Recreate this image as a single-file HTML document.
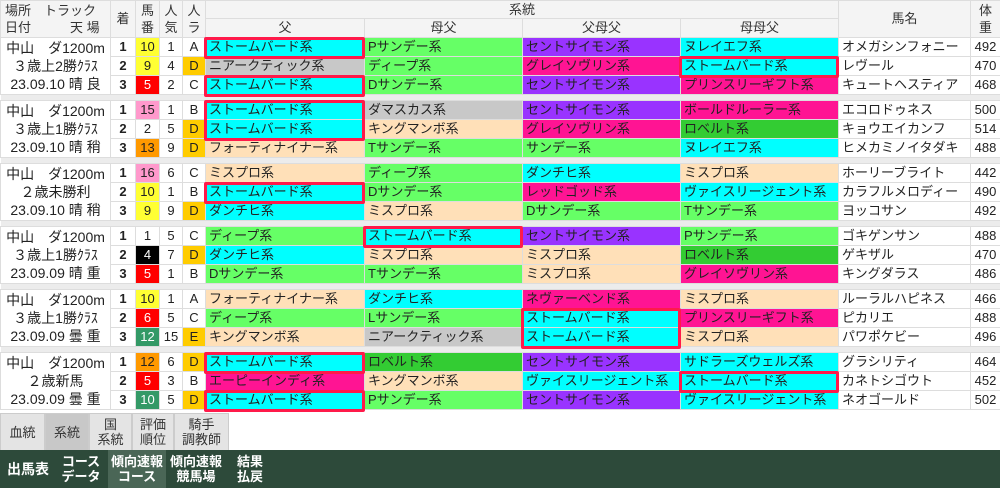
<!DOCTYPE html>
<html><head><meta charset="utf-8"><style>
*{margin:0;padding:0;box-sizing:border-box}
body{width:1000px;height:488px;overflow:hidden;background:#fff;font-family:"Liberation Sans","Noto Sans CJK JP",sans-serif;position:relative;color:#222}
table{border-collapse:collapse;table-layout:fixed;position:absolute;left:0;top:0;width:1000px}
tr{height:19px}
td{border:1px solid #ddd;height:19px;font-size:13px;line-height:14px;padding:0 3px;white-space:nowrap;overflow:hidden;vertical-align:middle}
.h td{background:#f4f4f4;text-align:center;color:#333;font-size:13px}
.n{text-align:center;padding:0}
.b{font-weight:bold}
.v{text-align:center;font-size:14px;padding:0}
.v div{height:55px;line-height:18px;overflow:hidden}
tr.sep{height:6px}
.sep td{height:6px;background:#ececec;border:none;line-height:0;font-size:0}
.cy{background:#00ffff}.gr{background:#66ff66}.pu{background:#9933ff}.pk{background:#ff1493}.gy{background:#c8c8c8}.pe{background:#ffe0b8}.dg{background:#33cc33}
.y{background:#ffff33}.r{background:#f00;color:#fff}.p{background:#ff99cc}.o{background:#ff9900}.g{background:#339966;color:#fff}.k{background:#000;color:#fff}
.d{background:#ffcc00}
.box{position:absolute;border:3px solid #ff1a4a;border-radius:2px}
.tabs{position:absolute;left:0;top:413px;height:37px;width:1000px;background:#fff}
.tab{position:absolute;top:0;height:37px;background:#e4e4e4;border:1px solid #ccc;border-bottom:none;font-size:13px;line-height:15px;text-align:center;color:#333;display:flex;align-items:center;justify-content:center}
.foot{position:absolute;left:0;top:450px;width:1000px;height:38px;background:#2d4a3a;color:#fff;font-size:13px;font-weight:bold}
.fi{position:absolute;top:0;height:38px;display:flex;align-items:center;justify-content:center;line-height:15px;text-align:center}
</style></head><body>
<table>
<colgroup><col style="width:110px"><col style="width:25px"><col style="width:24px"><col style="width:23px"><col style="width:23px"><col style="width:159px"><col style="width:158px"><col style="width:158px"><col style="width:158px"><col style="width:132px"><col style="width:30px"></colgroup>
<tr class="h" style="height:18px"><td rowspan="2" style="line-height:17px;padding:0 4px;text-align:left">場所　トラック<br>日付　　　天 場</td><td rowspan="2" class="n">着</td><td rowspan="2" class="n" style="line-height:17px">馬<br>番</td><td rowspan="2" class="n" style="line-height:17px">人<br>気</td><td rowspan="2" class="n" style="line-height:17px">人<br>ラ</td><td colspan="4" style="height:18px">系統</td><td rowspan="2">馬名</td><td rowspan="2" class="n" style="line-height:17px">体<br>重</td></tr>
<tr class="h"><td>父</td><td>母父</td><td>父母父</td><td>母母父</td></tr>

<tr><td rowspan="3" class="v"><div>中山　ダ1200m<br>３歳上2勝ｸﾗｽ<br>23.09.10 晴 良</div></td><td class="n b">1</td><td class="n y">10</td><td class="n">1</td><td class="n">A</td><td class="cy">ストームバード系</td><td class="gr">Pサンデー系</td><td class="pu">セントサイモン系</td><td class="cy">ヌレイエフ系</td><td>オメガシンフォニー</td><td class="n">492</td></tr>
<tr><td class="n b">2</td><td class="n y">9</td><td class="n">4</td><td class="n d">D</td><td class="gy">ニアークティック系</td><td class="gr">ディープ系</td><td class="pk">グレイソヴリン系</td><td class="cy">ストームバード系</td><td>レヴール</td><td class="n">470</td></tr>
<tr><td class="n b">3</td><td class="n r">5</td><td class="n">2</td><td class="n">C</td><td class="cy">ストームバード系</td><td class="gr">Dサンデー系</td><td class="pu">セントサイモン系</td><td class="pk">プリンスリーギフト系</td><td>キュートヘスティア</td><td class="n">468</td></tr>
<tr class="sep"><td colspan="11"></td></tr>

<tr><td rowspan="3" class="v"><div>中山　ダ1200m<br>３歳上1勝ｸﾗｽ<br>23.09.10 晴 稍</div></td><td class="n b">1</td><td class="n p">15</td><td class="n">1</td><td class="n">B</td><td class="cy">ストームバード系</td><td class="gy">ダマスカス系</td><td class="pu">セントサイモン系</td><td class="pk">ボールドルーラー系</td><td>エコロドゥネス</td><td class="n">500</td></tr>
<tr><td class="n b">2</td><td class="n">2</td><td class="n">5</td><td class="n d">D</td><td class="cy">ストームバード系</td><td class="pe">キングマンボ系</td><td class="pk">グレイソヴリン系</td><td class="dg">ロベルト系</td><td>キョウエイカンフ</td><td class="n">514</td></tr>
<tr><td class="n b">3</td><td class="n o">13</td><td class="n">9</td><td class="n d">D</td><td class="pe">フォーティナイナー系</td><td class="gr">Tサンデー系</td><td class="gr">サンデー系</td><td class="cy">ヌレイエフ系</td><td>ヒメカミノイタダキ</td><td class="n">488</td></tr>
<tr class="sep"><td colspan="11"></td></tr>

<tr><td rowspan="3" class="v"><div>中山　ダ1200m<br>２歳未勝利<br>23.09.10 晴 稍</div></td><td class="n b">1</td><td class="n p">16</td><td class="n">6</td><td class="n">C</td><td class="pe">ミスプロ系</td><td class="gr">ディープ系</td><td class="cy">ダンチヒ系</td><td class="pe">ミスプロ系</td><td>ホーリーブライト</td><td class="n">442</td></tr>
<tr><td class="n b">2</td><td class="n y">10</td><td class="n">1</td><td class="n">B</td><td class="cy">ストームバード系</td><td class="gr">Dサンデー系</td><td class="pk">レッドゴッド系</td><td class="cy">ヴァイスリージェント系</td><td>カラフルメロディー</td><td class="n">490</td></tr>
<tr><td class="n b">3</td><td class="n y">9</td><td class="n">9</td><td class="n d">D</td><td class="cy">ダンチヒ系</td><td class="pe">ミスプロ系</td><td class="gr">Dサンデー系</td><td class="gr">Tサンデー系</td><td>ヨッコサン</td><td class="n">492</td></tr>
<tr class="sep"><td colspan="11"></td></tr>

<tr><td rowspan="3" class="v"><div>中山　ダ1200m<br>３歳上1勝ｸﾗｽ<br>23.09.09 晴 重</div></td><td class="n b">1</td><td class="n">1</td><td class="n">5</td><td class="n">C</td><td class="gr">ディープ系</td><td class="cy">ストームバード系</td><td class="pu">セントサイモン系</td><td class="gr">Pサンデー系</td><td>ゴキゲンサン</td><td class="n">488</td></tr>
<tr><td class="n b">2</td><td class="n k">4</td><td class="n">7</td><td class="n d">D</td><td class="cy">ダンチヒ系</td><td class="pe">ミスプロ系</td><td class="pe">ミスプロ系</td><td class="dg">ロベルト系</td><td>ゲキザル</td><td class="n">470</td></tr>
<tr><td class="n b">3</td><td class="n r">5</td><td class="n">1</td><td class="n">B</td><td class="gr">Dサンデー系</td><td class="gr">Tサンデー系</td><td class="pe">ミスプロ系</td><td class="pk">グレイソヴリン系</td><td>キングダラス</td><td class="n">486</td></tr>
<tr class="sep"><td colspan="11"></td></tr>

<tr><td rowspan="3" class="v"><div>中山　ダ1200m<br>３歳上1勝ｸﾗｽ<br>23.09.09 曇 重</div></td><td class="n b">1</td><td class="n y">10</td><td class="n">1</td><td class="n">A</td><td class="pe">フォーティナイナー系</td><td class="cy">ダンチヒ系</td><td class="pk">ネヴァーベンド系</td><td class="pe">ミスプロ系</td><td>ルーラルハピネス</td><td class="n">466</td></tr>
<tr><td class="n b">2</td><td class="n r">6</td><td class="n">5</td><td class="n">C</td><td class="gr">ディープ系</td><td class="gr">Lサンデー系</td><td class="cy">ストームバード系</td><td class="pk">プリンスリーギフト系</td><td>ピカリエ</td><td class="n">488</td></tr>
<tr><td class="n b">3</td><td class="n g">12</td><td class="n">15</td><td class="n d">E</td><td class="pe">キングマンボ系</td><td class="gy">ニアークティック系</td><td class="cy">ストームバード系</td><td class="pe">ミスプロ系</td><td>パワポケビー</td><td class="n">496</td></tr>
<tr class="sep"><td colspan="11"></td></tr>

<tr><td rowspan="3" class="v"><div>中山　ダ1200m<br>２歳新馬<br>23.09.09 曇 重</div></td><td class="n b">1</td><td class="n o">12</td><td class="n">6</td><td class="n d">D</td><td class="cy">ストームバード系</td><td class="dg">ロベルト系</td><td class="pu">セントサイモン系</td><td class="cy">サドラーズウェルズ系</td><td>グラシリティ</td><td class="n">464</td></tr>
<tr><td class="n b">2</td><td class="n r">5</td><td class="n">3</td><td class="n">B</td><td class="pk">エーピーインディ系</td><td class="pe">キングマンボ系</td><td class="cy">ヴァイスリージェント系</td><td class="cy">ストームバード系</td><td>カネトシゴウト</td><td class="n">452</td></tr>
<tr><td class="n b">3</td><td class="n g">10</td><td class="n">5</td><td class="n d">D</td><td class="cy">ストームバード系</td><td class="gr">Pサンデー系</td><td class="pu">セントサイモン系</td><td class="cy">ヴァイスリージェント系</td><td>ネオゴールド</td><td class="n">502</td></tr>
</table>

<div class="box" style="left:204px;top:37px;width:161px;height:22px"></div>
<div class="box" style="left:204px;top:75px;width:161px;height:22px"></div>
<div class="box" style="left:679px;top:56px;width:160px;height:22px"></div>
<div class="box" style="left:204px;top:100px;width:161px;height:41px"></div>
<div class="box" style="left:204px;top:182px;width:161px;height:22px"></div>
<div class="box" style="left:363px;top:226px;width:160px;height:22px"></div>
<div class="box" style="left:521px;top:308px;width:160px;height:41px"></div>
<div class="box" style="left:204px;top:352px;width:161px;height:22px"></div>
<div class="box" style="left:204px;top:390px;width:161px;height:22px"></div>
<div class="box" style="left:679px;top:371px;width:160px;height:22px"></div>

<div class="tabs">
<div class="tab" style="left:0;width:45px">血統</div>
<div class="tab" style="left:45px;width:44px;background:#c8c8c8">系統</div>
<div class="tab" style="left:89px;width:43px">国<br>系統</div>
<div class="tab" style="left:132px;width:42px">評価<br>順位</div>
<div class="tab" style="left:174px;width:55px">騎手<br>調教師</div>
</div>
<div class="foot">
<div class="fi" style="left:0;width:56px;font-size:14px">出馬表</div>
<div class="fi" style="left:58px;width:46px">コース<br>データ</div>
<div class="fi" style="left:108px;width:58px;background:#4a6656">傾向速報<br>コース</div>
<div class="fi" style="left:168px;width:56px">傾向速報<br>競馬場</div>
<div class="fi" style="left:232px;width:36px">結果<br>払戻</div>
</div>
</body></html>
